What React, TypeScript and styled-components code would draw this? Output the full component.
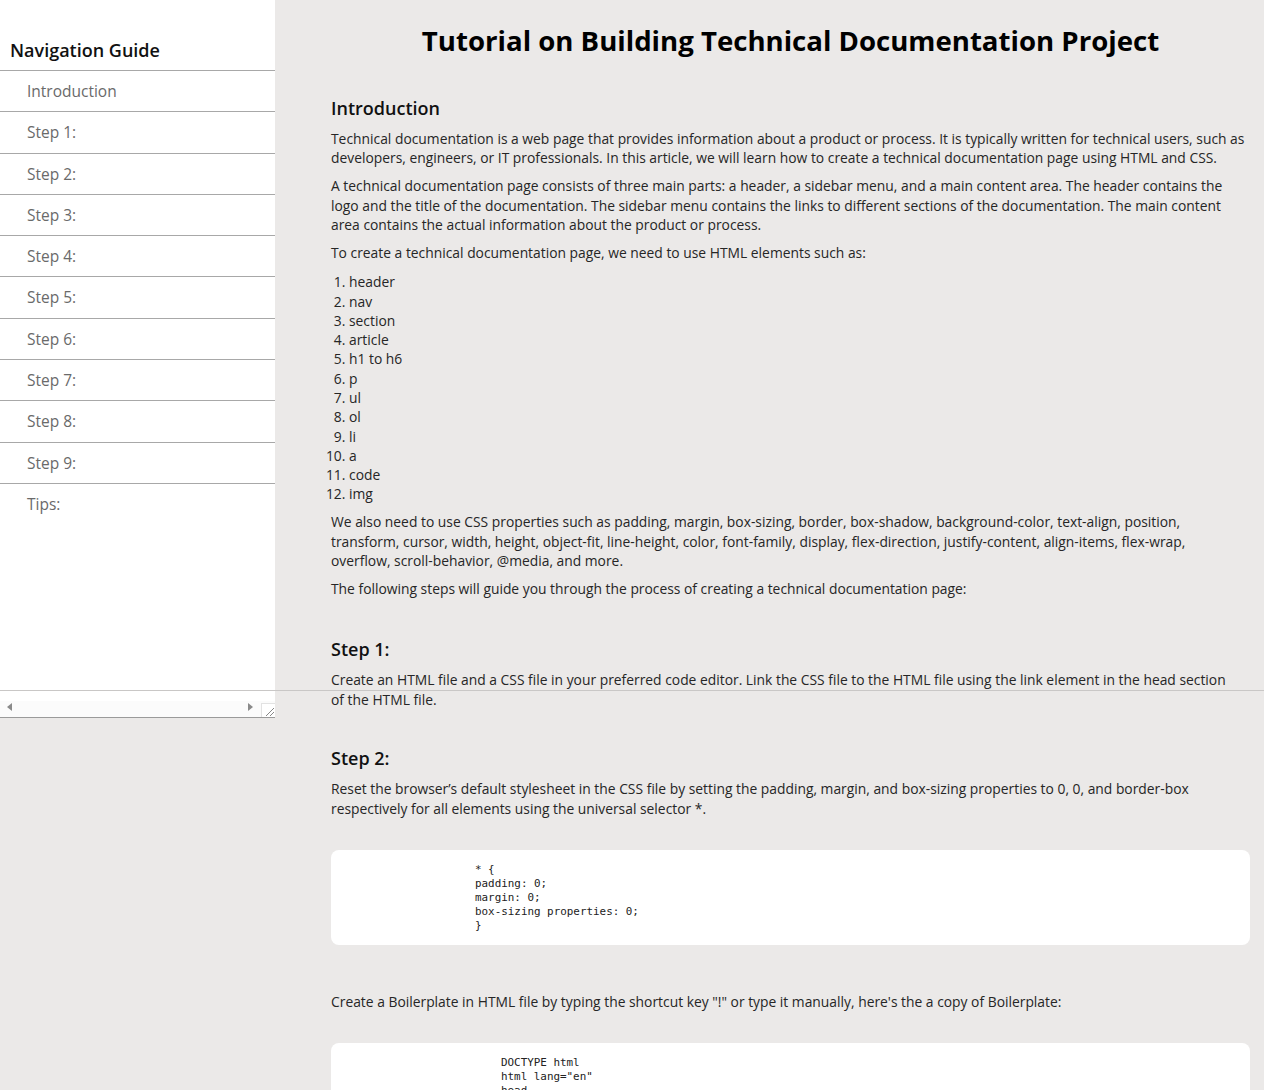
import styled, { createGlobalStyle } from "styled-components";

const GlobalStyle = createGlobalStyle`
  * {
    box-sizing: border-box;
  }
  body {
    margin: 0;
    background: #ebe9e8;
    font-family: "Open Sans", "Noto Sans", sans-serif;
    color: #222;
  }
`;

const navItems = [
  "Introduction",
  "Step 1:",
  "Step 2:",
  "Step 3:",
  "Step 4:",
  "Step 5:",
  "Step 6:",
  "Step 7:",
  "Step 8:",
  "Step 9:",
  "Tips:",
];

const htmlElements = [
  "header",
  "nav",
  "section",
  "article",
  "h1 to h6",
  "p",
  "ul",
  "ol",
  "li",
  "a",
  "code",
  "img",
];

const resetCode = `* {
padding: 0;
margin: 0;
box-sizing properties: 0;
}`;

const boilerplateCode = `DOCTYPE html
html lang="en"
head
meta charset="UTF-8"
meta http-equiv="X-UA-Compatible" content="IE=edge"
meta name="viewport" content="width=device-width, initial-scale=1.0"
title Document /title
/head
body

/body
/html`;

export default function App() {
  return (
    <>
      <GlobalStyle />
      <Sidebar id="navbar">
        <NavHeader>Navigation Guide</NavHeader>
        <NavList>
          {navItems.map((item) => (
            <NavLink key={item} href="#">
              {item}
            </NavLink>
          ))}
        </NavList>
        <ScrollBar>
          <Arrow $dir="left" />
          <Arrow $dir="right" />
          <ResizeCorner>
            <svg width="13" height="13" viewBox="0 0 13 13">
              <path d="M4 12 L12 4 M8 12 L12 8" stroke="#888" strokeWidth="1" />
            </svg>
          </ResizeCorner>
        </ScrollBar>
      </Sidebar>
      <EdgeLine />

      <Main id="main-doc">
        <Title>Tutorial on Building Technical Documentation Project</Title>

        <Section>
          <SectionTitle>Introduction</SectionTitle>
          <Para>
            Technical documentation is a web page that provides information about a
            product or process. It is typically written for technical users, such as
            developers, engineers, or IT professionals. In this article, we will learn
            how to create a technical documentation page using HTML and CSS.
          </Para>
          <Para>
            A technical documentation page consists of three main parts: a header, a
            sidebar menu, and a main content area. The header contains the logo and the
            title of the documentation. The sidebar menu contains the links to different
            sections of the documentation. The main content area contains the actual
            information about the product or process.
          </Para>
          <Para>
            To create a technical documentation page, we need to use HTML elements such
            as:
          </Para>
          <List>
            {htmlElements.map((el) => (
              <li key={el}>{el}</li>
            ))}
          </List>
          <Para $maxWidth={905}>
            We also need to use CSS properties such as padding, margin, box-sizing,
            border, box-shadow, background-color, text-align, position, transform,
            cursor, width, height, object-fit, line-height, color, font-family, display,
            flex-direction, justify-content, align-items, flex-wrap, overflow,
            scroll-behavior, @media, and more.
          </Para>
          <Para>
            The following steps will guide you through the process of creating a
            technical documentation page:
          </Para>
        </Section>

        <Section>
          <SectionTitle>Step 1:</SectionTitle>
          <Para $maxWidth={905}>
            Create an HTML file and a CSS file in your preferred code editor. Link the
            CSS file to the HTML file using the link element in the head section of the
            HTML file.
          </Para>
        </Section>

        <Section>
          <SectionTitle>Step 2:</SectionTitle>
          <Para>
            Reset the browser’s default stylesheet in the CSS file by setting the
            padding, margin, and box-sizing properties to 0, 0, and border-box
            respectively for all elements using the universal selector *.
          </Para>
          <CodeBlock $indent={144}>
            <code>{resetCode}</code>
          </CodeBlock>
          <Para>
            Create a Boilerplate in HTML file by typing the shortcut key "!" or type it
            manually, here's the a copy of Boilerplate:
          </Para>
          <CodeBlock $indent={170}>
            <code>{boilerplateCode}</code>
          </CodeBlock>
        </Section>
      </Main>
    </>
  );
}

const Sidebar = styled.nav`
  position: fixed;
  top: 0;
  left: 0;
  width: 275px;
  height: 718px;
  background: #fff;
  display: flex;
  flex-direction: column;
  z-index: 2;
`;

const NavHeader = styled.header`
  height: 71px;
  padding: 37px 0 0 10px;
  font-size: 18px;
  line-height: 26px;
  font-weight: 600;
  color: #111;
  border-bottom: 1px solid #a8a8a8;
`;

const NavList = styled.div`
  flex: 1;
  display: flex;
  flex-direction: column;
`;

const NavLink = styled.a`
  display: block;
  height: 41.3px;
  padding: 10px 0 0 27px;
  font-size: 15.5px;
  line-height: 21px;
  color: #6a6a6a;
  text-decoration: none;
  border-bottom: 1px solid #a8a8a8;

  &:last-child {
    border-bottom: none;
  }
`;

const ScrollBar = styled.div`
  position: relative;
  height: 28px;
  border-bottom: 1px solid #9a9a9a;
  display: flex;
  align-items: flex-end;
  justify-content: space-between;
  padding: 0 0 2px 7px;
  background: linear-gradient(#fff 0 11px, #fbfbfb 11px);
`;

const Arrow = styled.span<{ $dir: "left" | "right" }>`
  width: 0;
  height: 0;
  margin-bottom: 4px;
  border-top: 4px solid transparent;
  border-bottom: 4px solid transparent;
  ${({ $dir }) =>
    $dir === "left"
      ? "border-right: 5px solid #8a8a8a;"
      : "border-left: 5px solid #8a8a8a; margin-left: auto; margin-right: 22px;"}
`;

const ResizeCorner = styled.span`
  position: absolute;
  right: 0;
  bottom: 0;
  width: 14px;
  height: 14px;
  border-left: 1px solid #e2e2e2;
  border-top: 1px solid #e2e2e2;
  background: #fff;
  svg {
    display: block;
  }
`;

const EdgeLine = styled.div`
  position: fixed;
  top: 690px;
  left: 0;
  right: 0;
  height: 1px;
  background: #c9c7c6;
  z-index: 3;
`;

const Main = styled.main`
  padding: 20px 14px 40px 331px;
`;

const Title = styled.h1`
  margin: 0;
  text-align: center;
  font-size: 27.6px;
  line-height: 40px;
  font-weight: 700;
  color: #000;
`;

const Section = styled.section`
  margin-top: 35px;

  & + & {
    margin-top: 38px;
  }

  & + & + & {
    margin-top: 36px;
  }
`;

const SectionTitle = styled.h2`
  margin: 0 0 8px;
  font-size: 18px;
  line-height: 26px;
  font-weight: 600;
  color: #111;
`;

const Para = styled.p<{ $maxWidth?: number }>`
  margin: 0 0 8.6px;
  max-width: ${({ $maxWidth }) => ($maxWidth ? `${$maxWidth}px` : "none")};
  font-size: 13.85px;
  line-height: 19.4px;
  color: #262626;
`;

const List = styled.ol`
  margin: 9.6px 0 8.4px;
  padding-left: 18px;
  font-size: 13.85px;
  line-height: 19.3px;
  color: #262626;
`;

const CodeBlock = styled.pre<{ $indent: number }>`
  margin: 32px 0 47px;
  padding: 13px 16px 12px ${({ $indent }) => $indent}px;
  background: #fff;
  border-radius: 8px;
  font-family: "DejaVu Sans Mono", "Liberation Mono", monospace;
  font-size: 10.9px;
  line-height: 14px;
  color: #222;
  white-space: pre;
  overflow: hidden;
`;
